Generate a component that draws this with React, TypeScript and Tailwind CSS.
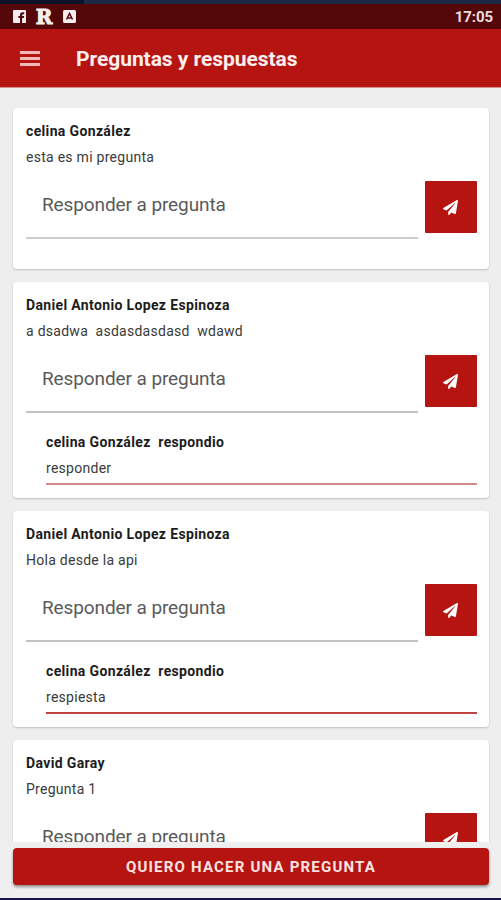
import { FaPaperPlane } from "react-icons/fa";

type Reply = { author: string; text: string; line: string };

type Question = {
  author: string;
  text: string;
  underline: string;
  reply?: Reply;
};

const questions: Question[] = [
  {
    author: "celina González",
    text: "esta es mi pregunta",
    underline: "h-[2px] bg-[#cdcdcd]",
  },
  {
    author: "Daniel Antonio Lopez Espinoza",
    text: "a dsadwa  asdasdasdasd  wdawd",
    underline: "h-[2px] bg-[#c2c2c2]",
    reply: {
      author: "celina González",
      text: "responder",
      line: "h-[2px] bg-[#d08a8a]",
    },
  },
  {
    author: "Daniel Antonio Lopez Espinoza",
    text: "Hola desde la api",
    underline: "h-[2px] bg-[#c2c2c2]",
    reply: {
      author: "celina González",
      text: "respiesta",
      line: "h-[2px] bg-[#c04442]",
    },
  },
  { author: "David Garay", text: "Pregunta 1", underline: "h-[2px] bg-[#c2c2c2]" },
];

const StatusBar = () => (
  <div className="flex h-[25px] shrink-0 items-center justify-between bg-[#540708] pl-[13px] pr-2">
    <div className="flex items-center">
      <svg width="13" height="13" viewBox="0 0 13 13">
        <rect width="13" height="13" rx="1" fill="#f6eeee" />
        <path
          d="M7 13V8H5.4V6H7V4.9C7 3.2 8 2.3 9.6 2.3h1.6v1.9h-1.1c-.7 0-1 .3-1 .9V6h2L10.8 8H9.1v5z"
          fill="#540708"
        />
      </svg>
      <span className="ml-[9px] flex h-4 w-[18px] items-center justify-center font-['DejaVu_Serif',serif] text-[20px] font-bold leading-none text-[#f6eeee] [-webkit-text-stroke:1px_#f6eeee]">
        R
      </span>
      <svg className="ml-[10px]" width="13" height="13" viewBox="0 0 13 13">
        <rect width="13" height="13" rx="1.5" fill="#f6eeee" />
        <path
          d="M3.5 9.5L6.5 3.5L9.5 9.5M5 8h3"
          fill="none"
          stroke="#540708"
          strokeWidth="1.5"
        />
      </svg>
    </div>
    <span className="pt-px text-[15px] font-bold leading-none tracking-[-0.1px] text-[#e9dede]">
      17:05
    </span>
  </div>
);

const Header = () => (
  <header className="flex h-[59px] shrink-0 items-center border-b border-[#d88f8c] bg-[#b51411] pt-px">
    <button className="ml-5 flex w-5 flex-col gap-[3px]" aria-label="Menú">
      <span className="h-[3px] bg-[#f2b9b6]" />
      <span className="h-[3px] bg-[#f2b9b6]" />
      <span className="h-[3px] bg-[#f2b9b6]" />
    </button>
    <h1 className="ml-9 whitespace-nowrap pt-[3px] text-[21px] font-bold tracking-[-0.05px] text-[#fdeeee]">
      Preguntas y respuestas
    </h1>
  </header>
);

const AnswerField = ({ underline }: { underline: string }) => (
  <div className="flex items-start gap-[7px]">
    <div className="flex-1">
      <div className="h-14 pl-4 pt-[10px] text-[19px] leading-[28px] tracking-[-0.1px] text-[#5a5a5a]">
        Responder a pregunta
      </div>
      <div className={underline} />
    </div>
    <button
      className="flex h-[52px] w-[52px] items-center justify-center rounded-[1px] bg-[#b51411]"
      aria-label="Enviar"
    >
      <FaPaperPlane className="mr-[2px] size-[15px] text-white" />
    </button>
  </div>
);

const QuestionCard = ({ question }: { question: Question }) => (
  <article className="rounded-[4px] bg-white pb-[11px] pl-[13px] pr-3 pt-[10px] shadow-[0_1px_2px_rgba(0,0,0,0.2)]">
    <h2 className="text-[14px] font-bold leading-[26px] tracking-[0.35px] text-[#1c1c1c]">
      {question.author}
    </h2>
    <p className="mb-[11px] whitespace-pre text-[14px] leading-[26px] tracking-[0.27px] text-[#3a3a3a]">
      {question.text}
    </p>
    <AnswerField underline={question.underline} />
    {question.reply ? (
      <div className="ml-5 mt-[16px]">
        <h3 className="whitespace-pre text-[14px] font-bold leading-[26px] tracking-[0.35px] text-[#1c1c1c]">
          {question.reply.author}
          {"  respondio"}
        </h3>
        <p className="text-[14px] leading-[26px] tracking-[0.27px] text-[#3a3a3a]">
          {question.reply.text}
        </p>
        <div className="mt-[2px] h-1">
          <div className={question.reply.line} />
        </div>
      </div>
    ) : (
      <div className="h-[19px]" />
    )}
  </article>
);

export default function App() {
  return (
    <div className="flex h-[900px] w-[501px] flex-col overflow-hidden bg-[#eeeeee] font-[Roboto,sans-serif]">
      <div className="flex h-1 shrink-0">
        <div className="w-[84px] bg-[#0c1128]" />
        <div className="flex-1 bg-[#1c2a45]" />
      </div>
      <StatusBar />
      <Header />
      <main className="flex min-h-0 flex-1 flex-col gap-[13px] overflow-hidden pl-[13px] pr-3 pt-5">
        {questions.map((question, i) => (
          <QuestionCard key={i} question={question} />
        ))}
      </main>
      <footer className="h-[58px] shrink-0 border-b-2 border-[#16164a] bg-[#efefef] pl-[13px] pr-3 pt-[6px]">
        <button className="h-[37px] w-full rounded-[4px] bg-[#b51411] pt-[2px] text-[15px] font-bold tracking-[1.2px] text-[#fbe3e2] shadow-[0_2px_3px_rgba(0,0,0,0.4)]">
          QUIERO HACER UNA PREGUNTA
        </button>
      </footer>
    </div>
  );
}
